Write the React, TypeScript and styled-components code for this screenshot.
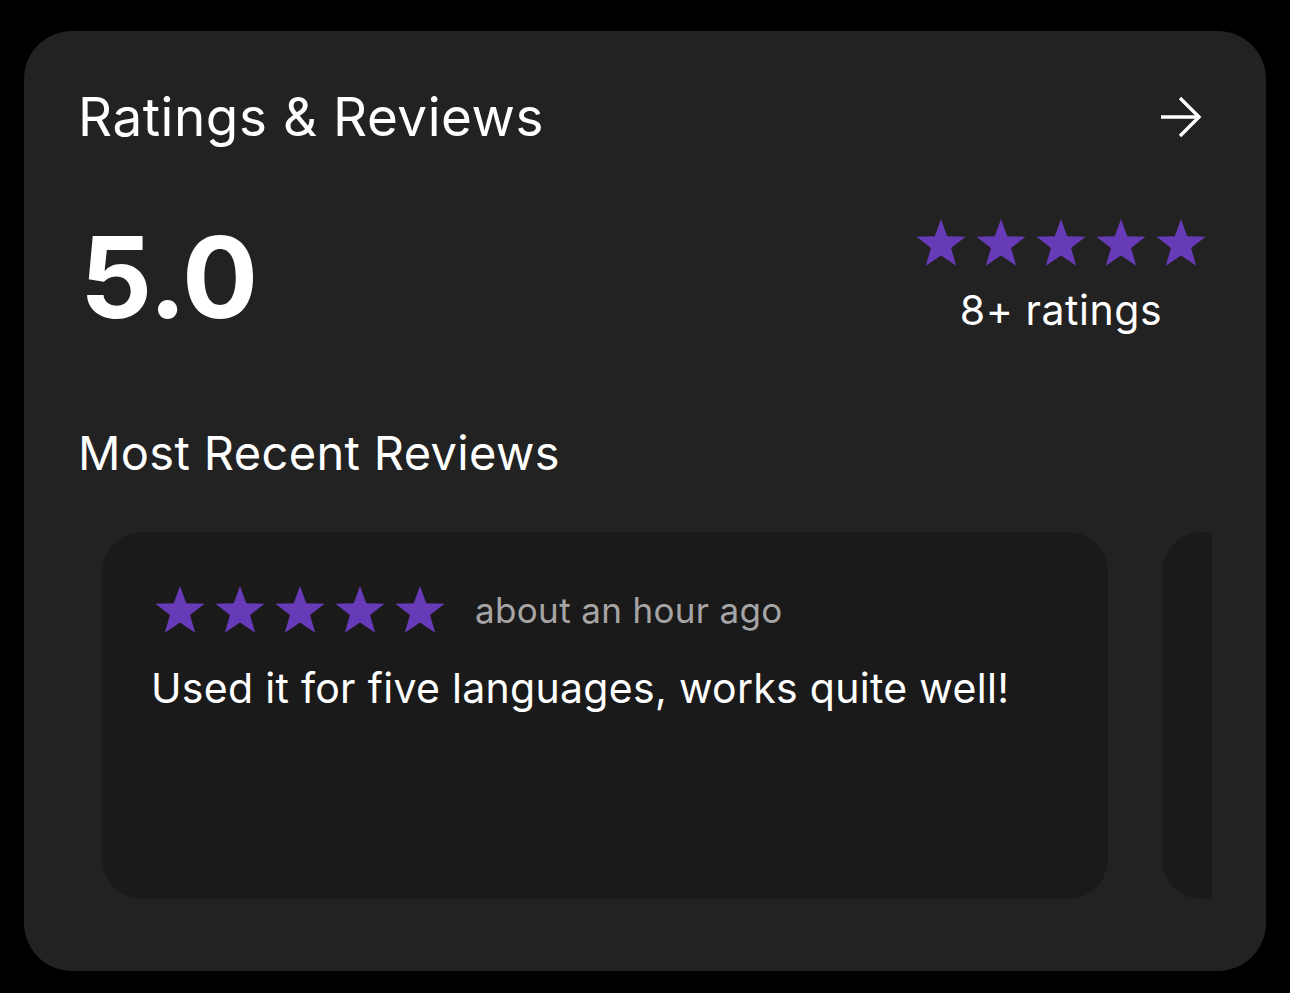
import React from "react";
import styled, { createGlobalStyle } from "styled-components";

const Global = createGlobalStyle`
  html, body { margin: 0; padding: 0; background: #000; }
  body { font-family: Inter, "Noto Sans", sans-serif; -webkit-font-smoothing: antialiased; }
  * { box-sizing: border-box; }
`;

const Page = styled.div`
  width: 1290px;
  height: 993px;
  padding: 31px 24px 22px 24px;
  background: #000;
`;

const Card = styled.section`
  height: 940px;
  border-radius: 48px;
  background: #222222;
  padding: 54px 54px 0 56px;
  display: flex;
  flex-direction: column;
  color: #fff;
`;

const Header = styled.div`
  display: flex;
  align-items: center;
  justify-content: space-between;
  height: 64px;
`;

const Title = styled.h1`
  margin: 0 0 0 -2px;
  font-size: 53px;
  font-weight: 400;
  line-height: 64px;
  letter-spacing: 0.55px;
`;

const ArrowButton = styled.button`
  background: none;
  border: 0;
  padding: 0;
  margin-right: 9px;
  width: 44px;
  height: 44px;
  display: flex;
  align-items: center;
  justify-content: center;
  color: #fff;
`;

const ScoreRow = styled.div`
  display: flex;
  justify-content: space-between;
  align-items: flex-start;
  margin-top: 48px;
  height: 150px;
`;

const Score = styled.div`
  font-size: 113px;
  font-weight: 700;
  line-height: 140px;
  letter-spacing: -1px;
  margin: 10px 0 0 0;
`;

const Summary = styled.div`
  display: flex;
  flex-direction: column;
  align-items: center;
  margin-top: 22px;
  margin-right: 6px;
  gap: 20px;
`;

const Stars = styled.div`
  display: flex;
  gap: 10px;
`;

const RatingsCount = styled.div`
  font-size: 41px;
  line-height: 48px;
  font-weight: 400;
  letter-spacing: 0.55px;
`;

const SectionTitle = styled.h2`
  margin: 78px 0 0 -2px;
  font-size: 47px;
  font-weight: 400;
  line-height: 56px;
  letter-spacing: 0.35px;
`;

const Scroller = styled.div`
  margin-top: 51px;
  overflow: hidden;
  display: flex;
  gap: 54px;
  padding-left: 22px;
`;

const ReviewCard = styled.article<{ $w: number }>`
  flex: 0 0 ${(p) => p.$w}px;
  height: 367px;
  border-radius: 40px;
  background: #1b1a1b;
  padding: 54px 48px 0 49px;
`;

const ReviewMeta = styled.div`
  display: flex;
  align-items: center;
  gap: 30px;
  padding-left: 4px;
`;

const TimeAgo = styled.span`
  font-size: 35px;
  color: #a6a5a6;
  letter-spacing: 0.35px;
`;

const ReviewText = styled.p`
  margin: 30px 0 0 0;
  font-size: 41px;
  line-height: 50px;
  letter-spacing: 0.3px;
`;

function starPoints(cx: number, cy: number, R: number, r: number) {
  const pts: string[] = [];
  for (let i = 0; i < 10; i++) {
    const rad = i % 2 === 0 ? R : r;
    const a = -Math.PI / 2 + (i * Math.PI) / 5;
    pts.push(`${(cx + rad * Math.cos(a)).toFixed(2)},${(cy + rad * Math.sin(a)).toFixed(2)}`);
  }
  return pts.join(" ");
}

const Star = () => (
  <svg width="50" height="47" viewBox="0 0 50 47">
    <polygon points={starPoints(25, 25.8, 25.8, 10.6)} fill="#673ab7" />
  </svg>
);

const FiveStars = () => (
  <Stars>
    {[0, 1, 2, 3, 4].map((i) => (
      <Star key={i} />
    ))}
  </Stars>
);

export default function App() {
  return (
    <>
      <Global />
      <Page>
        <Card>
          <Header>
            <Title>Ratings &amp; Reviews</Title>
            <ArrowButton aria-label="See all">
              <svg width="44" height="44" viewBox="0 0 44 44" fill="none" stroke="#fff" strokeWidth="3.4" strokeLinecap="butt" strokeLinejoin="miter">
                <path d="M2 22 H40" />
                <path d="M21 3 L40 22 L21 41" />
              </svg>
            </ArrowButton>
          </Header>
          <ScoreRow>
            <Score>5.0</Score>
            <Summary>
              <FiveStars />
              <RatingsCount>8+ ratings</RatingsCount>
            </Summary>
          </ScoreRow>
          <SectionTitle>Most Recent Reviews</SectionTitle>
          <Scroller>
            <ReviewCard $w={1006}>
              <ReviewMeta>
                <FiveStars />
                <TimeAgo>about an hour ago</TimeAgo>
              </ReviewMeta>
              <ReviewText>Used it for five languages, works quite well!</ReviewText>
            </ReviewCard>
            <ReviewCard $w={1006} />
          </Scroller>
        </Card>
      </Page>
    </>
  );
}
